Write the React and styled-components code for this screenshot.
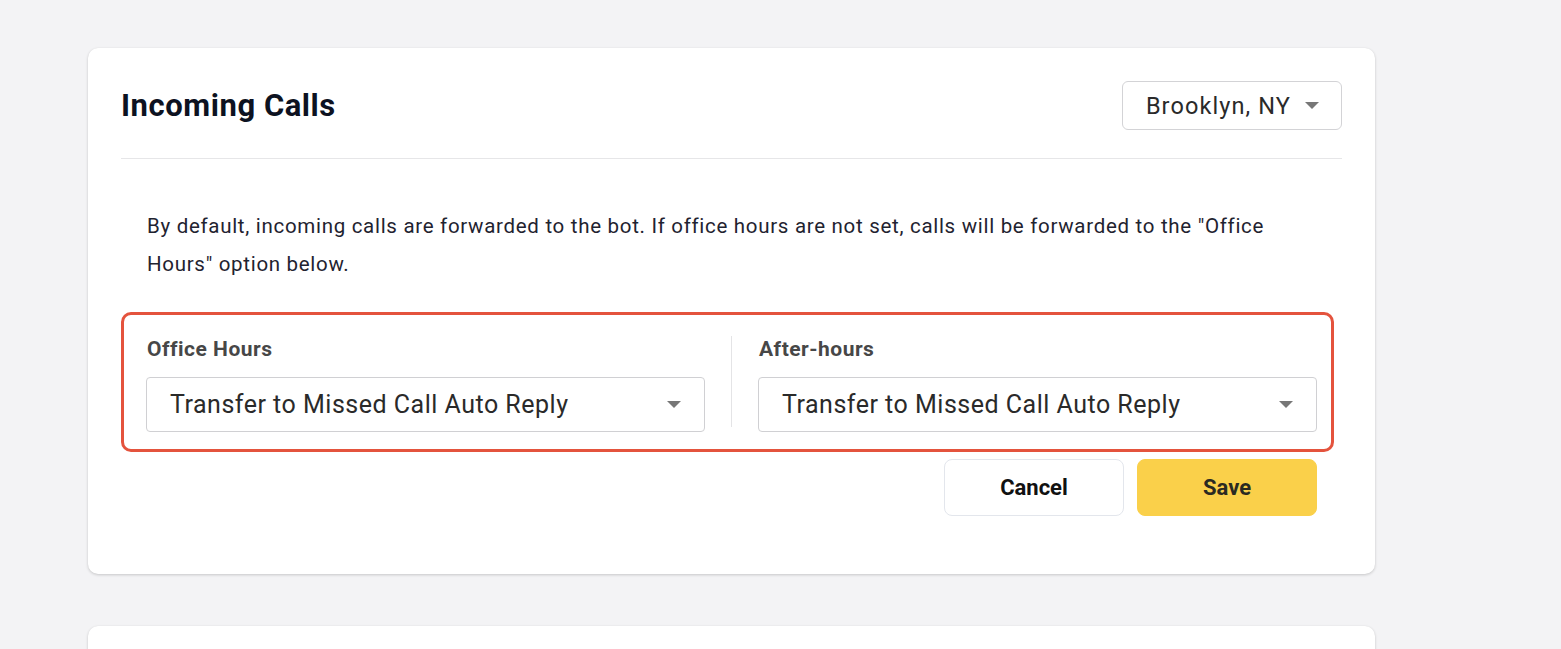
import React from "react"
import styled, { createGlobalStyle } from "styled-components"

const GlobalStyle = createGlobalStyle`
  body {
    margin: 0;
    background: #f3f3f5;
    font-family: Roboto, "Liberation Sans", sans-serif;
  }
`;

const Page = styled.main`
  padding: 48px 0 0 88px;
  display: flex;
  flex-direction: column;
  gap: 52px;
  min-height: 649px;
  box-sizing: border-box;
`;

const Card = styled.section`
  width: 1287px;
  box-sizing: border-box;
  background: #fff;
  border-radius: 10px;
  box-shadow: 0 1px 3px rgba(0, 0, 0, 0.18), 0 0 1px rgba(0, 0, 0, 0.06);
  padding: ${p => p.$empty ? "0" : "33px 33px 58px"};
  min-height: ${p => p.$empty ? "120px" : "auto"};
`;

const Header = styled.div`
  display: flex;
  align-items: center;
  justify-content: space-between;
  padding-bottom: 28px;
  border-bottom: 1px solid #e6e6e8;
`;

const Title = styled.h2`
  margin: 0;
  font-size: 31px;
  font-weight: 700;
  letter-spacing: 0.55px;
  color: #0d1221;
`;

const LocationSelect = styled.button`
  display: flex;
  align-items: center;
  gap: 14px;
  height: 49px;
  padding: 0 22px 0 23px;
  background: #fff;
  border: 1px solid #d3d3d6;
  border-radius: 6px;
  font-family: inherit;
  font-size: 23.5px;
  letter-spacing: 1.1px;
  color: #2a2a2a;
`;

const Caret = styled.span`
  width: 0;
  height: 0;
  border-left: 7px solid transparent;
  border-right: 7px solid transparent;
  border-top: 7px solid #777;
`;

const Description = styled.p`
  margin: 48px 0 29px;
  padding: 0 26px;
  font-size: 20.5px;
  line-height: 38px;
  letter-spacing: 0.7px;
  color: #1f2330;
`;

const Highlight = styled.div`
  margin-right: 8px;
  border: 3px solid #e4533d;
  border-radius: 10px;
  padding: 21px 14px 17px 22px;
  display: grid;
  grid-template-columns: 1fr 1px 1fr;
  gap: 26px;
`;

const Field = styled.div`
  display: flex;
  flex-direction: column;
  gap: 15px;
`;

const Label = styled.label`
  padding-left: 1px;
  font-size: 21px;
  line-height: 26px;
  font-weight: 700;
  color: #474747;
  letter-spacing: 0.5px;
`;

const Select = styled.div`
  height: 55px;
  box-sizing: border-box;
  border: 1px solid #d0d0d3;
  border-radius: 4px;
  display: flex;
  align-items: center;
  justify-content: space-between;
  padding: 0 23px;
  font-size: 25px;
  letter-spacing: 0.5px;
  color: #2a2a2a;
`;

const Divider = styled.div`
  background: #e4e4e6;
  margin: 0 0 5px;
`;

const Actions = styled.div`
  display: flex;
  justify-content: flex-end;
  gap: 13px;
  padding: 7px 25px 0 0;
`;

const Button = styled.button`
  width: 180px;
  height: 57px;
  border-radius: 8px;
  font-family: inherit;
  font-size: 22px;
  font-weight: 700;
  color: ${p => p.$primary ? "#2a2a22" : "#111"};
  background: ${p => p.$primary ? "#fad04a" : "#fff"};
  border: 1px solid ${p => p.$primary ? "#fad04a" : "#e3e6ec"};
`;

const SelectField = ({ label, value }) => (
  <Field>
    <Label>{label}</Label>
    <Select>
      {value}
      <Caret />
    </Select>
  </Field>
)

export default function App() {
  return (
    <>
      <GlobalStyle />
      <Page>
        <Card>
          <Header>
            <Title>Incoming Calls</Title>
            <LocationSelect>
              Brooklyn, NY
              <Caret />
            </LocationSelect>
          </Header>
          <Description>
            By default, incoming calls are forwarded to the bot. If office hours are not set, calls will be forwarded to the "Office Hours" option below.
          </Description>
          <Highlight>
            <SelectField label="Office Hours" value="Transfer to Missed Call Auto Reply" />
            <Divider />
            <SelectField label="After-hours" value="Transfer to Missed Call Auto Reply" />
          </Highlight>
          <Actions>
            <Button>Cancel</Button>
            <Button $primary>Save</Button>
          </Actions>
        </Card>
        <Card $empty />
      </Page>
    </>
  )
}
